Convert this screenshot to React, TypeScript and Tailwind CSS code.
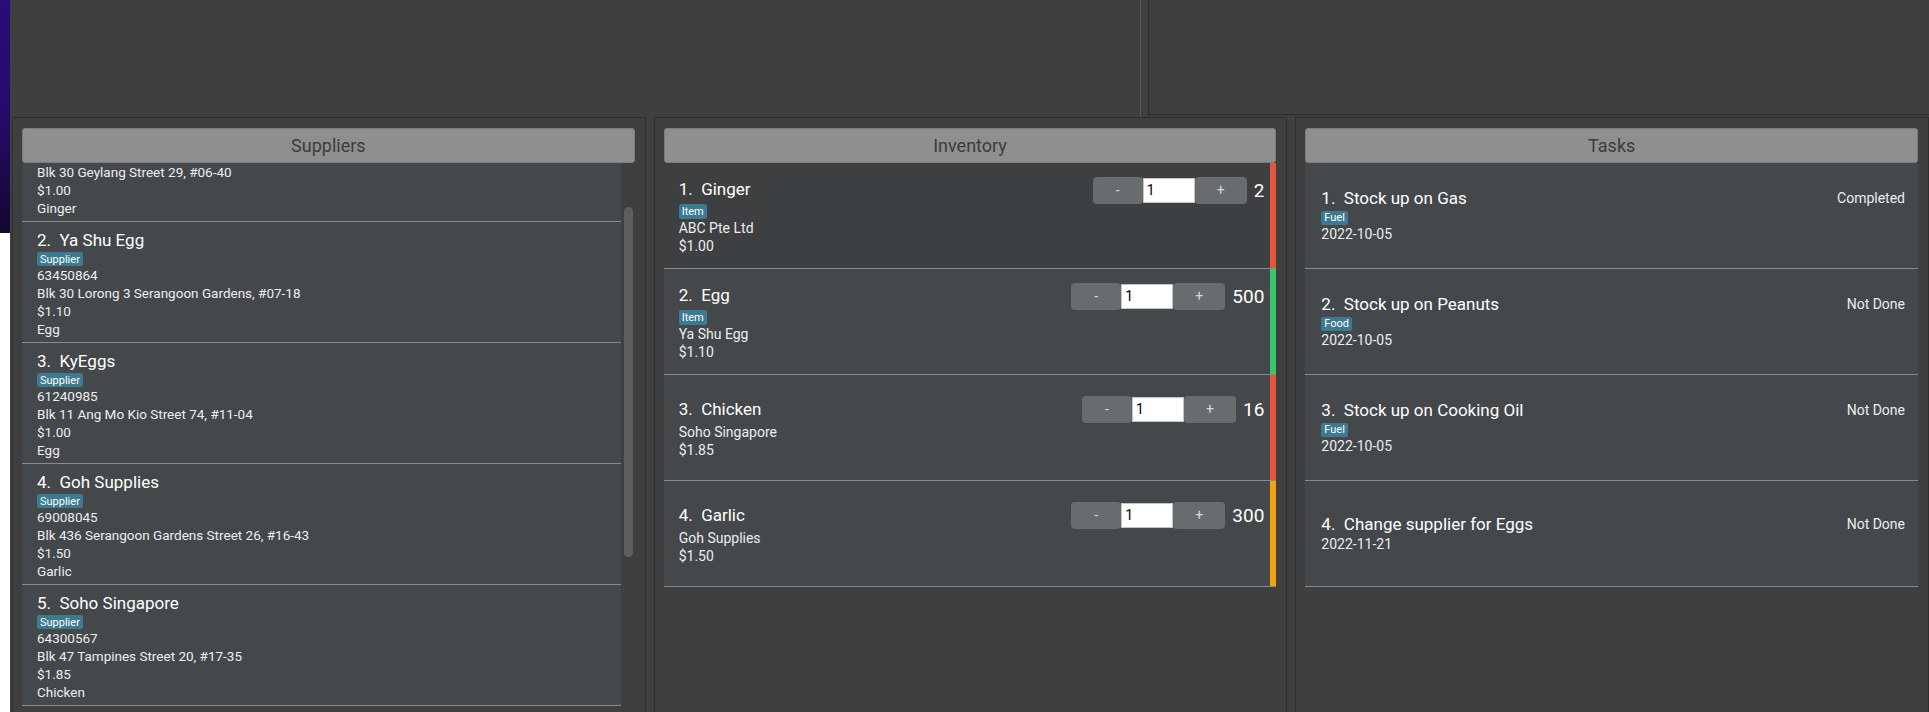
import React from 'react';

interface Supplier {
  name: string;
  phone: string;
  address: string;
  price: string;
  item: string;
}

interface InventoryItem {
  name: string;
  tag?: string;
  supplier: string;
  price: string;
  qty: number;
  bar: string;
  dark?: boolean;
}

interface Task {
  title: string;
  tag?: string;
  date: string;
  status: string;
}

// first supplier is scrolled half out of view, only its last lines show
const firstSupplierTail = ['Blk 30 Geylang Street 29, #06-40', '$1.00', 'Ginger'];

const suppliers: Supplier[] = [
  { name: 'Ya Shu Egg', phone: '63450864', address: 'Blk 30 Lorong 3 Serangoon Gardens, #07-18', price: '$1.10', item: 'Egg' },
  { name: 'KyEggs', phone: '61240985', address: 'Blk 11 Ang Mo Kio Street 74, #11-04', price: '$1.00', item: 'Egg' },
  { name: 'Goh Supplies', phone: '69008045', address: 'Blk 436 Serangoon Gardens Street 26, #16-43', price: '$1.50', item: 'Garlic' },
  { name: 'Soho Singapore', phone: '64300567', address: 'Blk 47 Tampines Street 20, #17-35', price: '$1.85', item: 'Chicken' },
];

const inventory: InventoryItem[] = [
  { name: 'Ginger', tag: 'Item', supplier: 'ABC Pte Ltd', price: '$1.00', qty: 2, bar: 'bg-[#e8553d]', dark: true },
  { name: 'Egg', tag: 'Item', supplier: 'Ya Shu Egg', price: '$1.10', qty: 500, bar: 'bg-[#3cc46c]' },
  { name: 'Chicken', supplier: 'Soho Singapore', price: '$1.85', qty: 16, bar: 'bg-[#e8553d]' },
  { name: 'Garlic', supplier: 'Goh Supplies', price: '$1.50', qty: 300, bar: 'bg-[#f0a30a]' },
];

const tasks: Task[] = [
  { title: 'Stock up on Gas', tag: 'Fuel', date: '2022-10-05', status: 'Completed' },
  { title: 'Stock up on Peanuts', tag: 'Food', date: '2022-10-05', status: 'Not Done' },
  { title: 'Stock up on Cooking Oil', tag: 'Fuel', date: '2022-10-05', status: 'Not Done' },
  { title: 'Change supplier for Eggs', date: '2022-11-21', status: 'Not Done' },
];

const Tag = ({ label }: { label: string }) => (
  <span className="inline-flex h-[14px] items-center rounded-[2px] bg-[#3b7a90] px-[3px] text-[11px] leading-none text-white">
    {label}
  </span>
);

const PanelHeader = ({ title }: { title: string }) => (
  <div className="flex h-[35px] shrink-0 items-center justify-center rounded-[3px] border border-[#7c7c7c] bg-[#8f8f8f] text-[18px] text-[#3c3c3c]">
    {title}
  </div>
);

const Panel = ({ title, children }: { title: string; children: React.ReactNode }) => (
  <div className="flex h-[620px] min-w-0 flex-1 flex-col border border-[#2e2e2e] pt-[10px] pl-[9px] pr-[10px]">
    <PanelHeader title={title} />
    {children}
  </div>
);

const SupplierRow = ({ s, index }: { s: Supplier; index: number }) => (
  <div className="flex h-[121px] flex-col border-b border-[#8a8a8a] bg-[#44484a] pl-[15px] pt-[8px]">
    <div className="h-[20px] text-[17px] leading-[20px] text-white whitespace-pre">{`${index}.  ${s.name}`}</div>
    <div className="mt-[2px] flex">
      <Tag label="Supplier" />
    </div>
    <div className="text-[13.5px] leading-[18px] text-[#ededed]">
      <div>{s.phone}</div>
      <div>{s.address}</div>
      <div>{s.price}</div>
      <div>{s.item}</div>
    </div>
  </div>
);

const Stepper = ({ qty }: { qty: number }) => (
  <div className="flex items-center">
    <button className="flex h-[27px] w-[50px] items-center justify-center rounded-[4px] bg-[#686c6f] text-[14px] text-[#d8d8d8]">-</button>
    <div className="flex h-[25px] w-[52px] items-center border border-[#c4c4c4] bg-white pl-[3px] text-[14px] text-black">1</div>
    <button className="flex h-[27px] w-[52px] items-center justify-center rounded-[4px] bg-[#686c6f] text-[14px] text-[#d8d8d8]">+</button>
    <span className="ml-[7px] text-[19px] leading-none text-white">{qty}</span>
  </div>
);

const InventoryRow = ({ it, index }: { it: InventoryItem; index: number }) => (
  <div className="flex h-[106px] border-b border-[#8a8a8a]">
    <div className={`flex flex-1 flex-col justify-center pl-[15px] pr-[6px] ${it.dark ? 'bg-[#3e3f40]' : 'bg-[#44484a]'}`}>
      <div className="flex h-[27px] items-center justify-between">
        <span className="text-[17px] text-white whitespace-pre">{`${index}.  ${it.name}`}</span>
        <Stepper qty={it.qty} />
      </div>
      {it.tag && (
        <div className="flex">
          <span className="inline-flex h-[15px] items-center rounded-[2px] bg-[#3b7a90] px-[3px] text-[11px] leading-none text-white">
            {it.tag}
          </span>
        </div>
      )}
      <div className="text-[14px] leading-[18px] text-[#ededed]">
        <div>{it.supplier}</div>
        <div>{it.price}</div>
      </div>
    </div>
    <div className={`w-[6px] ${it.bar}`} />
  </div>
);

const TaskRow = ({ t, index }: { t: Task; index: number }) => (
  <div className="flex h-[106px] flex-col justify-center border-b border-[#8a8a8a] bg-[#44484a] pl-[16px] pr-[13px]">
    <div className="flex h-[20px] items-center justify-between">
      <span className="text-[17px] text-white whitespace-pre">{`${index}.  ${t.title}`}</span>
      <span className="text-[14px] text-[#ededed]">{t.status}</span>
    </div>
    {t.tag && (
      <div className="mt-[2px] flex">
        <Tag label={t.tag} />
      </div>
    )}
    <div className="text-[14px] leading-[18px] text-[#ededed]">{t.date}</div>
  </div>
);

export default function App() {
  return (
    <div className="flex h-[712px] w-[1929px] overflow-hidden bg-[#3f3f3f] font-['Roboto','Liberation_Sans',sans-serif]">
      <div className="flex w-[10px] shrink-0 flex-col">
        <div className="h-[233px] bg-gradient-to-b from-[#2c0b7c] via-[#25096a] to-[#140732]" />
        <div className="flex-1 bg-white" />
      </div>
      <div className="flex min-w-0 flex-1 flex-col">
        <div className="flex h-[117px] shrink-0">
          <div className="w-[1131px] shrink-0 border-r border-[#555555]" />
          <div className="ml-[7px] h-[115px] flex-1 border-b border-l border-[#2c2c2c]" />
        </div>
        <div className="flex flex-1 gap-2 overflow-hidden pl-[2px]">
          <Panel title="Suppliers">
            <div className="flex min-h-0 flex-1">
              <div className="min-w-0 flex-1 overflow-hidden">
                <div className="flex h-[59px] flex-col border-b border-[#8a8a8a] bg-[#44484a] pl-[15px] text-[13.5px] leading-[18px] text-[#ededed]">
                  {firstSupplierTail.map((line) => (
                    <div key={line}>{line}</div>
                  ))}
                </div>
                {suppliers.map((s, i) => (
                  <SupplierRow key={s.name} s={s} index={i + 2} />
                ))}
              </div>
              <div className="w-[14px] shrink-0">
                <div className="ml-[3px] mt-[44px] h-[350px] w-[9px] rounded-full bg-[#5e5e5e]" />
              </div>
            </div>
          </Panel>
          <Panel title="Inventory">
            <div className="flex flex-col">
              {inventory.map((it, i) => (
                <InventoryRow key={it.name} it={it} index={i + 1} />
              ))}
            </div>
          </Panel>
          <Panel title="Tasks">
            <div className="flex flex-col">
              {tasks.map((t, i) => (
                <TaskRow key={t.title} t={t} index={i + 1} />
              ))}
            </div>
          </Panel>
        </div>
      </div>
    </div>
  );
}
